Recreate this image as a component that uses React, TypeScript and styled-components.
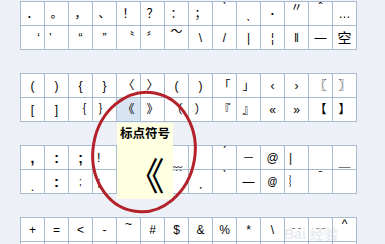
import React from "react";
import styled, { createGlobalStyle } from "styled-components";

const Global = createGlobalStyle`
  html, body { margin: 0; padding: 0; background: #edf1f7; }
  body { width: 385px; height: 244px; overflow: hidden; }
`;

type H = "l" | "c" | "r";
type V = "t" | "c" | "b";
type Spec = { t: string; h?: H; v?: V; s?: number; b?: boolean; hl?: boolean };
type C = string | Spec;

const Page = styled.div`
  position: relative;
  width: 385px;
  height: 244px;
  padding: 1px 0 0 20px;
  box-sizing: border-box;
  overflow: hidden;
  font-family: "Liberation Sans", "Noto Sans CJK SC", sans-serif;
`;

const Board = styled.div`
  display: flex;
  flex-direction: column;
  gap: 23px;
`;

const Grid = styled.div`
  display: grid;
  grid-template-columns: repeat(14, 23px);
  grid-auto-rows: 23px;
  gap: 1px;
  padding: 1px;
  width: fit-content;
  background: #a8bccd;
`;

const Cell = styled.div<{ $h: H; $v: V; $s: number; $b: boolean; $hl: boolean }>`
  display: flex;
  justify-content: ${(p) => (p.$h === "l" ? "flex-start" : p.$h === "r" ? "flex-end" : "center")};
  align-items: ${(p) => (p.$v === "t" ? "flex-start" : p.$v === "b" ? "flex-end" : "center")};
  padding: 0 4px;
  background: ${(p) => (p.$hl ? "#d8e4f1" : "#ffffff")};
  color: #000;
  font-size: ${(p) => p.$s}px;
  font-weight: ${(p) => (p.$b ? 700 : 400)};
  line-height: 1;
  overflow: hidden;
  white-space: nowrap;
`;

const Glyph = styled.span`
  display: block;
`;

const Tip = styled.div`
  position: absolute;
  left: 117px;
  top: 123px;
  width: 56px;
  height: 76px;
  background: #ffffe1;
  display: flex;
  flex-direction: column;
  align-items: center;
  font-family: "Noto Sans CJK SC", sans-serif;
  color: #000;
`;

const TipTitle = styled.div`
  font-size: 12.5px;
  font-weight: 700;
  line-height: 16px;
  margin-top: 2px;
  white-space: nowrap;
`;

const TipGlyph = styled.div`
  font-size: 38px;
  line-height: 1;
  margin-top: 14px;
  margin-left: 1px;
`;

const Ring = styled.svg`
  position: absolute;
  left: 0;
  top: 0;
  pointer-events: none;
`;

const Watermark = styled.div`
  position: absolute;
  left: 284px;
  top: 226px;
  font-family: "Liberation Sans", "Noto Sans CJK SC", sans-serif;
  font-size: 14px;
  line-height: 16px;
  font-weight: 700;
  color: rgba(190, 198, 210, 0.35);
  white-space: nowrap;
`;

const g1: C[] = [
  "．", "。", "，", "、", "！", "？", "：", "；",
  { t: "ˋ", v: "t" }, "ˎ", { t: "•", s: 8 }, { t: "〃", v: "t" }, { t: "ˆ", v: "t" }, "…",
  { t: "‘", h: "r" }, { t: "’", h: "l" }, "“", "”", "〝", "〞", { t: "～", v: "t" },
  "\\", "/", "|", "¦", "‖", "—", { t: "空", s: 14 },
];

const g2: C[] = [
  "(", ")", "{", "}", "〈", "〉", "(", ")", "「", "」", "‹", "›", "〖", "〗",
  "[", "]", "｛", "｝", { t: "《", hl: true }, "》", "（", "）", "『", "』", "«", "»", "【", "】",
];

const g3: C[] = [
  { t: ",", b: true, s: 14 }, { t: ":", b: true, s: 14 }, { t: ";", b: true, s: 14 }, { t: "!", h: "l" },
  "", "", { t: "﹏", v: "b" }, "", { t: "ˊ", v: "t" }, "－", "@", { t: "|", h: "l" }, { t: "_", v: "b" }, { t: "＿", v: "b" },
  { t: ".", v: "b" }, { t: ":", b: true, s: 15 }, { t: ";", s: 10 }, { t: "¡", h: "l" },
  "", "", { t: "﹋", v: "t" }, "ˏ", { t: "ˋ", v: "t" }, "—", { t: "@", b: true, s: 10 }, { t: "︴", h: "l" }, { t: "ˉ", v: "t" }, { t: "￣", v: "t" },
];

const g4: C[] = [
  "+", "=", "<", "-", { t: "~", v: "t" }, "#", "$", "&", "%", "*", "\\", "╌", "╌", { t: "^", v: "t" },
  "", "", "", "", "", "", "", "", "", "", "", "", "", "",
];

const norm = (c: C): Spec => (typeof c === "string" ? { t: c } : c);

function SymbolGrid({ cells }: { cells: C[] }) {
  return (
    <Grid>
      {cells.map((c, i) => {
        const s = norm(c);
        return (
          <Cell key={i} $h={s.h ?? "c"} $v={s.v ?? "c"} $s={s.s ?? 12} $b={!!s.b} $hl={!!s.hl}>
            <Glyph>{s.t}</Glyph>
          </Cell>
        );
      })}
    </Grid>
  );
}

export default function App() {
  return (
    <>
      <Global />
      <Page>
        <Board>
          <SymbolGrid cells={g1} />
          <SymbolGrid cells={g2} />
          <SymbolGrid cells={g3} />
          <SymbolGrid cells={g4} />
        </Board>
        <Watermark>Bai 经验</Watermark>
        <Tip>
          <TipTitle>标点符号</TipTitle>
          <TipGlyph>《</TipGlyph>
        </Tip>
        <Ring width="385" height="244" viewBox="0 0 385 244">
          <ellipse
            cx="144"
            cy="152"
            rx="51"
            ry="60"
            transform="rotate(10 144 152)"
            fill="none"
            stroke="#b3222b"
            strokeWidth="3"
          />
        </Ring>
      </Page>
    </>
  );
}
